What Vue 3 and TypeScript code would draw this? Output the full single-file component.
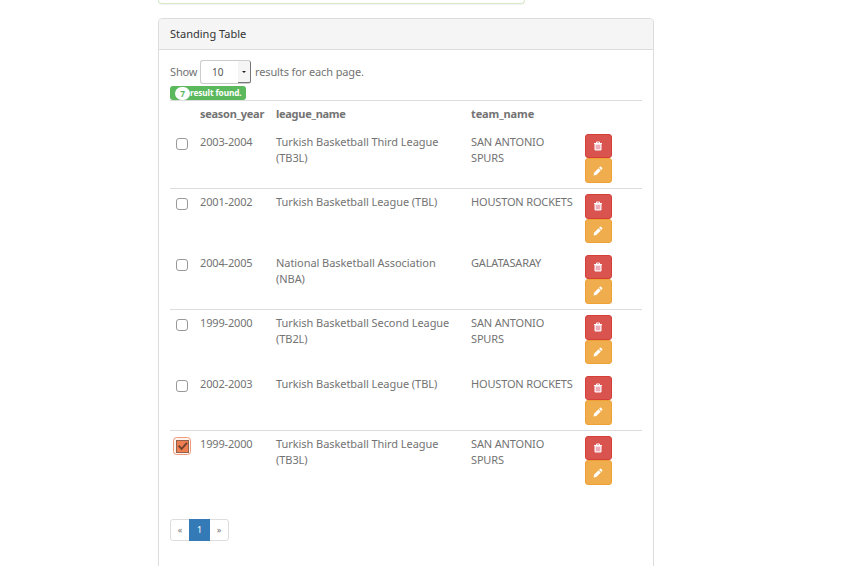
<script setup lang="ts">
import { ref } from 'vue'

interface Standing {
  season: string
  league: string
  team: string
  checked: boolean
  ruled: boolean
}

const third = 'Turkish Basketball Third League (TB3L)'
const tbl = 'Turkish Basketball League (TBL)'

const rows = ref<Standing[]>([
  { season: '2003-2004', league: third, team: 'SAN ANTONIO SPURS', checked: false, ruled: false },
  { season: '2001-2002', league: tbl, team: 'HOUSTON ROCKETS', checked: false, ruled: true },
  { season: '2004-2005', league: 'National Basketball Association (NBA)', team: 'GALATASARAY', checked: false, ruled: false },
  { season: '1999-2000', league: 'Turkish Basketball Second League (TB2L)', team: 'SAN ANTONIO SPURS', checked: false, ruled: true },
  { season: '2002-2003', league: tbl, team: 'HOUSTON ROCKETS', checked: false, ruled: false },
  { season: '1999-2000', league: third, team: 'SAN ANTONIO SPURS', checked: true, ruled: true },
])
</script>

<template>
  <main class="page">
    <div class="previous"></div>
    <section class="panel">
      <header class="heading">Standing Table</header>
      <div class="body">
        <div class="length">
          <span class="show">Show</span>
          <div class="select"><span class="value">10</span><span class="arrow"><i></i></span></div>
          <span class="results">results for each page.</span>
        </div>
        <div class="found"><span class="count">7</span><span>result found.</span></div>
        <div class="grid head">
          <span></span>
          <b>season_year</b>
          <b>league_name</b>
          <b class="team-head">team_name</b>
        </div>
        <div v-for="(row, i) in rows" :key="i" class="grid row" :class="{ ruled: row.ruled }">
          <div class="check" :class="{ checked: row.checked }" @click="row.checked = !row.checked">
            <svg v-if="row.checked" viewBox="0 0 18 18" width="18" height="18">
              <rect x=".5" y=".5" width="17" height="17" rx="3" fill="#fff3ed" stroke="#f09a7a" />
              <rect x="3" y="3" width="13" height="13" fill="#f5a582" />
              <rect x="4" y="4" width="11" height="11" fill="#ee7d50" />
              <rect x="3.5" y="3.5" width="12" height="12" fill="none" stroke="#2b211e" stroke-dasharray="1 1" />
              <path d="M5.6 8.6 8.6 11.8 14 5.9" fill="none" stroke="#70412f" stroke-width="1.9" />
            </svg>
          </div>
          <span class="cell season">{{ row.season }}</span>
          <span class="cell league">{{ row.league }}</span>
          <span class="cell team">{{ row.team }}</span>
          <div class="actions">
            <button class="delete" aria-label="Delete">
              <svg viewBox="0 0 10 10" width="10" height="10">
                <path d="M3.5 2V1h3v1M1 2.5h8" fill="none" stroke="#fff" />
                <path d="M2 3h6v6H2z" fill="#f3c0cb" stroke="#fff" />
                <path d="M4 4v4M6 4v4" stroke="#e08b96" stroke-width=".7" />
              </svg>
            </button>
            <button class="edit" aria-label="Edit">
              <svg viewBox="0 0 10 10" width="10" height="10">
                <path d="M.6 9.4 1 6.7 5.5 2.2 7.8 4.5 3.3 9ZM6.1 1.7 7 .8Q7.6.3 8.2.9L9.1 1.8Q9.7 2.4 9.2 3L8.3 3.9Z" fill="#fff" />
              </svg>
            </button>
          </div>
        </div>
        <nav class="pages"><a>«</a><a class="active">1</a><a>»</a></nav>
      </div>
    </section>
  </main>
</template>

<style>
body { background: #fff; overflow: hidden; }
</style>

<style scoped>
* { box-sizing: border-box; }
.page { width: 864px; height: 566px; overflow: hidden; padding-left: 158px; font: 11px/16px "Noto Sans", "Open Sans", sans-serif; color: #737373; }
.previous { width: 367px; height: 4px; border: 1px solid #d6e9c6; border-top: 0; border-radius: 0 0 4px 4px; box-shadow: 0 1px 1px rgba(0, 0, 0, .05); }
.panel { width: 496px; height: 570px; margin-top: 14px; border: 1px solid #ddd; border-radius: 4px; box-shadow: 0 1px 1px rgba(0, 0, 0, .05); }
.heading { height: 31px; padding: 7px 11px; background: #f5f5f5; border-bottom: 1px solid #ddd; border-radius: 3px 3px 0 0; color: #333; }
.body { padding: 10px 11px; }
.length { display: flex; align-items: center; height: 24px; white-space: nowrap; }
.show { width: 30px; letter-spacing: -.15px; }
.results { margin-left: 4px; letter-spacing: -.12px; }
.select { display: flex; width: 51px; height: 24px; border: 1px solid #ccc; border-right: 0; border-radius: 3px; }
.value { flex: 1; padding: 3px 0 0 11px; font-size: 10px; color: #555; }
.arrow { display: flex; align-items: center; justify-content: center; width: 13px; height: 22px; background: #f5f5f5; border-right: 1px solid #777; border-bottom: 1px solid #777; border-radius: 0 2px 2px 0; }
.arrow i { border: 2px solid transparent; border-top-color: #222; border-bottom: 0; }
.found { display: flex; align-items: center; width: 76px; height: 14px; margin-top: 2px; padding-left: 5px; background: #5cb85c; border-radius: 3px; color: #fff; font-size: 8.25px; font-weight: 700; line-height: 14px; letter-spacing: -.09px; white-space: nowrap; }
.count { width: 15px; height: 13px; border-radius: 7px; background: #fff; color: #5cb85c; text-align: center; line-height: 13px; }
.grid { display: grid; grid-template-columns: 30px 76px 195px 114px 1fr; width: 472px; }
.head { height: 27.8px; padding-top: 5px; border-top: 1px solid #ddd; letter-spacing: -.28px; }
.team-head { letter-spacing: -.12px; }
.row { height: 60.45px; padding-top: 6px; }
.ruled { border-top: 1px solid #ddd; padding-top: 5px; }
.cell { line-height: 16px; letter-spacing: -.06px; }
.season { letter-spacing: -.16px; }
.league { width: 180px; }
.team { width: 108px; letter-spacing: -.16px; }
.check { width: 12px; height: 12px; margin: 4px 0 0 6px; border: 1px solid #999; border-radius: 3px; background: #fff; }
.checked { width: 18px; height: 18px; margin: 1px 0 0 3px; border: 0; }
.check svg { display: block; }
.actions { display: flex; flex-direction: column; width: 27px; }
button { display: flex; align-items: center; justify-content: center; width: 27px; height: 24.5px; padding: 0 2px 0 0; border: 1px solid; border-radius: 3px; }
.delete { background: #d9534f; border-color: #d43f3a; }
.edit { background: #f0ad4e; border-color: #eea236; }
.pages { display: flex; width: 59px; height: 22px; margin-top: 28.5px; border: 1px solid #ddd; border-radius: 3px; font-size: 9px; line-height: 20px; text-align: center; }
.pages a { flex: 1; color: #777; }
.pages .active { flex: 0 0 21px; height: 22px; margin-top: -1px; background: #337ab7; color: #fff; line-height: 22px; }
</style>
